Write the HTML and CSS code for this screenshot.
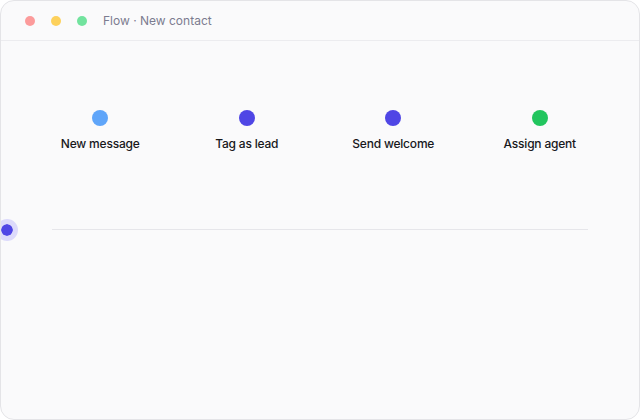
FILE: index.html
```html
<!DOCTYPE html>
<html lang="en">
<head>
    <meta charset="UTF-8">
    <title>Flow · New contact</title>
    <link rel="stylesheet" href="styles.css">
</head>
<body>
    <div class="window">
        <div class="titlebar">
            <span class="light red"></span>
            <span class="light yellow"></span>
            <span class="light green"></span>
            <span class="title">Flow · New contact</span>
        </div>
        <div class="flow">
            <ul class="steps">
                <li class="step"><span class="node blue"></span><span class="label">New message</span></li>
                <li class="step"><span class="node indigo"></span><span class="label">Tag as lead</span></li>
                <li class="step"><span class="node indigo"></span><span class="label">Send welcome</span></li>
                <li class="step"><span class="node green"></span><span class="label">Assign agent</span></li>
            </ul>
            <div class="track">
                <div class="rail"></div>
                <span class="token"></span>
            </div>
        </div>
    </div>
</body>
</html>
```

FILE: styles.css
```css
*{
    margin: 0;
    padding: 0;
    box-sizing: border-box;
}
body{
    font-family: Inter, "Noto Sans", sans-serif;
    background: #ffffff;
}
.window{
    width: 640px;
    height: 420px;
    border: 1px solid #e4e4e7;
    border-radius: 14px;
    background-color: #fafafb;
    overflow: hidden;
}
.titlebar{
    height: 40px;
    display: flex;
    align-items: center;
    gap: 16px;
    padding-left: 24px;
    border-bottom: 1px solid #ececef;
}
.light{
    width: 10px;
    height: 10px;
    border-radius: 50%;
}
.light.red{ background-color: #fc9b9b; }
.light.yellow{ background-color: #fdd15c; }
.light.green{ background-color: #72e39e; }
.title{
    font-size: 12px;
    color: #7c7c90;
}
.flow{
    padding: 69px 26px 0;
}
.steps{
    list-style: none;
    display: grid;
    grid-template-columns: repeat(4, 1fr);
}
.step{
    display: flex;
    flex-direction: column;
    align-items: center;
    gap: 10px;
}
.node{
    width: 16px;
    height: 16px;
    border-radius: 50%;
}
.node.blue{ background-color: #5fa5f9; }
.node.indigo{ background-color: #4f46e5; }
.node.green{ background-color: #22c55e; }
.label{
    font-size: 12px;
    font-weight: 500;
    letter-spacing: -0.2px;
    color: #18181b;
}
.track{
    position: relative;
    margin: 78px -26px 0;
    height: 2px;
}
.rail{
    margin: 0 51px;
    height: 1px;
    background-color: #e6e6ea;
}
.token{
    position: absolute;
    left: -5px;
    top: -10px;
    width: 22px;
    height: 22px;
    border-radius: 50%;
    background-color: #4f46e5;
    border: 5px solid #dcdafb;
    background-clip: padding-box;
}
```
